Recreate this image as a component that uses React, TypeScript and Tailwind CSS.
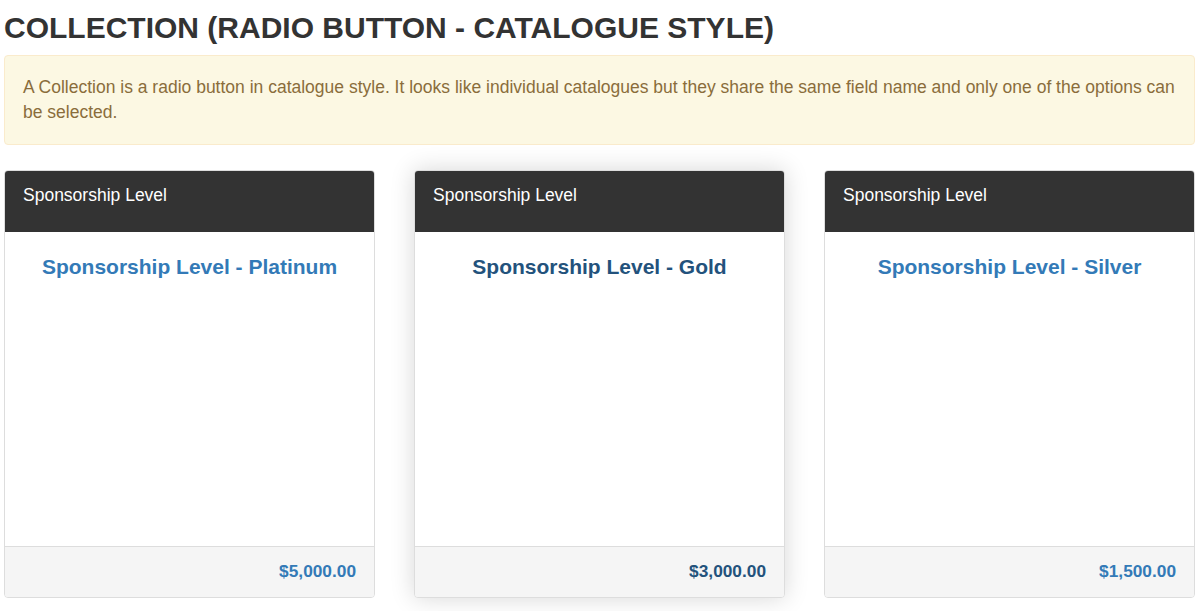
import React from "react";

const cards = [
  { title: "Sponsorship Level - Platinum", price: "$5,000.00", active: false },
  { title: "Sponsorship Level - Gold", price: "$3,000.00", active: true },
  { title: "Sponsorship Level - Silver", price: "$1,500.00", active: false },
];

export default function App() {
  return (
    <div
      className="min-h-[611px] bg-white pl-[4px] pr-[9px]"
      style={{ fontFamily: '"Liberation Sans", Arial, sans-serif' }}
    >
      <h2 className="pt-[11px] mb-[11px] text-[30px] leading-[33px] font-bold text-[#333333]">
        COLLECTION (RADIO BUTTON - CATALOGUE STYLE)
      </h2>
      <div className="rounded-[4px] border border-[#faebcc] bg-[#fcf8e3] px-[18px] py-[19px] text-[17.5px] leading-[25px] text-[#8a6d3b]">
        A Collection is a radio button in catalogue style. It looks like individual catalogues but they share the same field name and only one of the options can be selected.
      </div>
      <div className="mt-[25px] grid grid-cols-[371px_371px_371px] gap-x-[39px]">
        {cards.map((c) => (
          <div
            key={c.title}
            className={
              "flex h-[428px] flex-col overflow-hidden rounded-[4px] border border-[#dddddd] bg-white " +
              (c.active ? "shadow-[0_0_24px_rgba(0,0,0,0.16)]" : "")
            }
          >
            <div className="h-[61px] shrink-0 bg-[#333333] px-[18px] pt-[13px] text-[17.5px] leading-[22px] text-white">
              Sponsorship Level
            </div>
            <div className="flex-1 pt-[23px] text-center">
              <div
                className={
                  "text-[21px] leading-[24px] font-bold " +
                  (c.active ? "text-[#23527c]" : "text-[#337ab7]")
                }
              >
                {c.title}
              </div>
            </div>
            <div
              className={
                "flex h-[51px] shrink-0 items-center justify-end border-t border-[#dddddd] bg-[#f5f5f5] px-[18px] text-[17.3px] font-bold " +
                (c.active ? "text-[#23527c]" : "text-[#337ab7]")
              }
            >
              {c.price}
            </div>
          </div>
        ))}
      </div>
    </div>
  );
}
